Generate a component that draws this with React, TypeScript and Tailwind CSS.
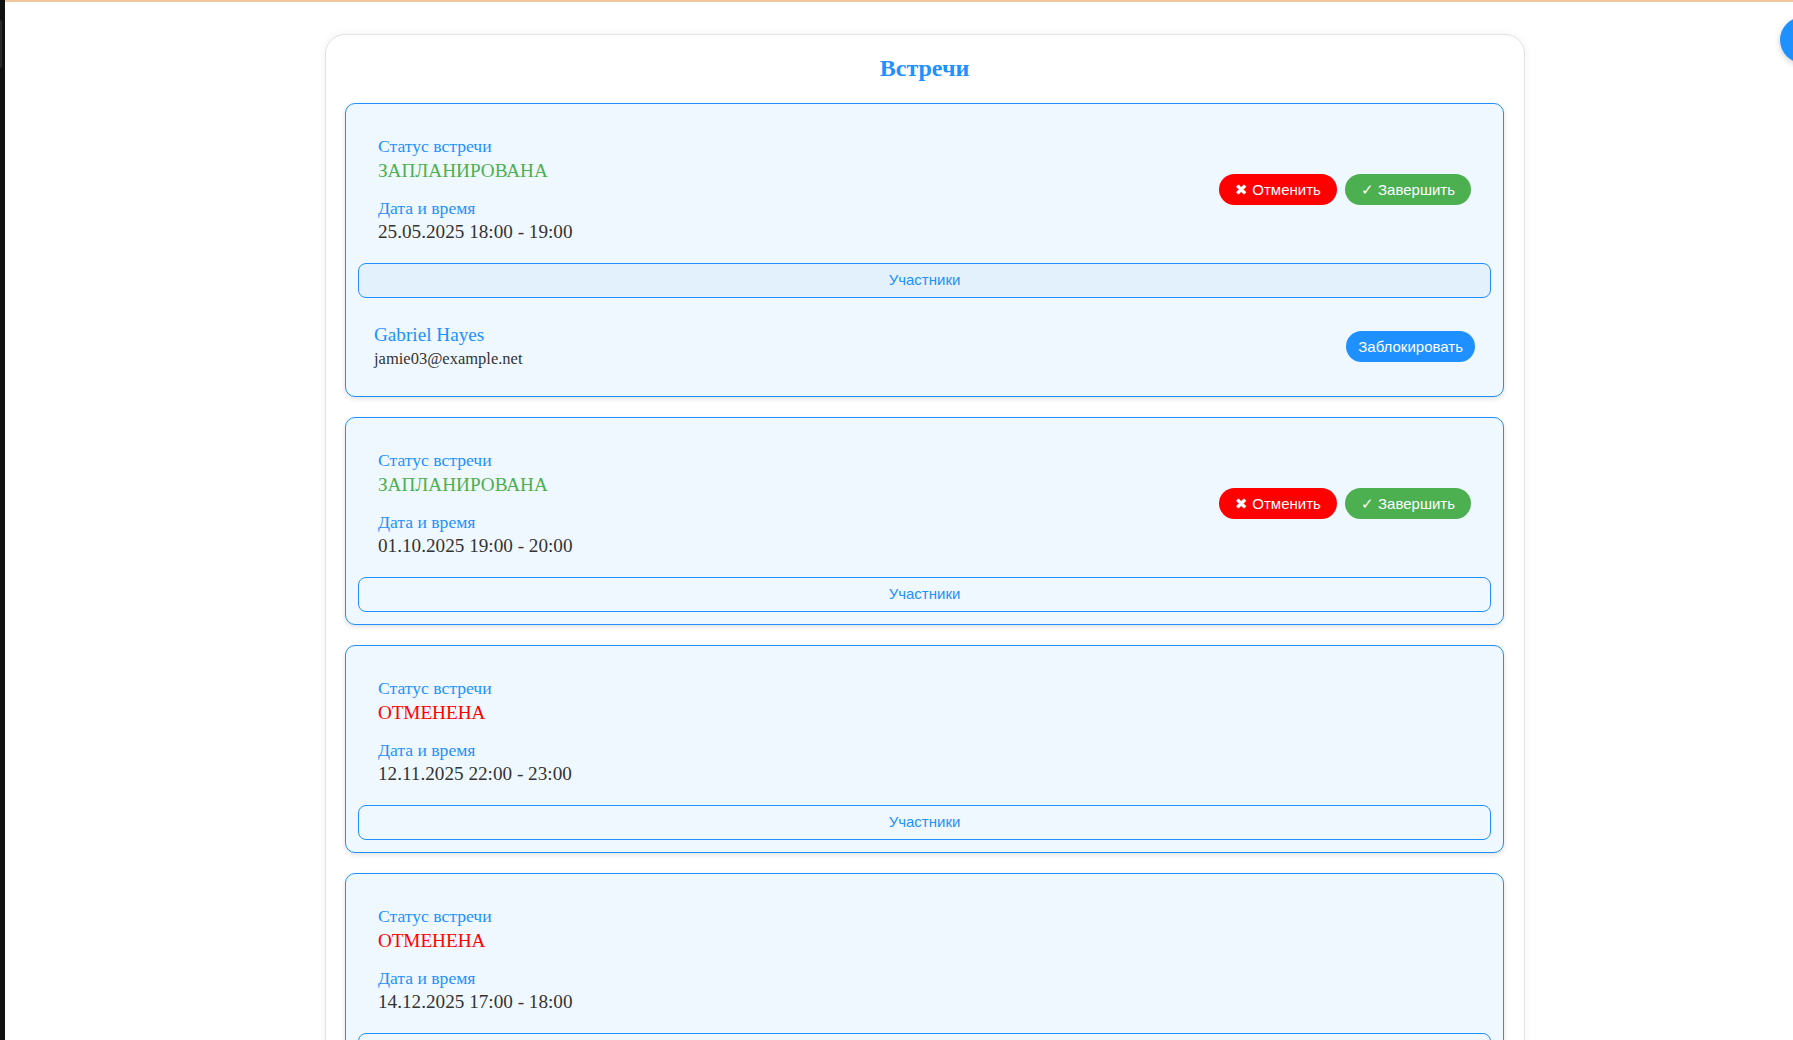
import React from "react";

type Meeting = {
  status: "planned" | "cancelled";
  date: string;
  expanded?: boolean;
  participants?: { name: string; email: string }[];
};

const meetings: Meeting[] = [
  {
    status: "planned",
    date: "25.05.2025 18:00 - 19:00",
    expanded: true,
    participants: [{ name: "Gabriel Hayes", email: "jamie03@example.net" }],
  },
  { status: "planned", date: "01.10.2025 19:00 - 20:00" },
  { status: "cancelled", date: "12.11.2025 22:00 - 23:00" },
  { status: "cancelled", date: "14.12.2025 17:00 - 18:00" },
];

const serif = { fontFamily: '"Liberation Serif", "Times New Roman", serif' };
const sans = { fontFamily: '"Liberation Sans", Arial, sans-serif' };

function MeetingCard({ m }: { m: Meeting }) {
  return (
    <div className="mb-[20px] rounded-[10px] border border-[#1e90ff] bg-[#f0f8ff] p-[12px] shadow-[0_2px_5px_rgba(0,0,0,0.12)]">
      <div className="flex items-center justify-between p-[20px]">
        <div style={serif}>
          <div className="text-[17.6px] leading-[20px] text-[#1e90ff]">Статус встречи</div>
          <div
            className={
              "mt-[4px] text-[19.2px] leading-[22px] " +
              (m.status === "planned" ? "text-[#4caf50]" : "text-[#ff0000]")
            }
          >
            {m.status === "planned" ? "ЗАПЛАНИРОВАНА" : "ОТМЕНЕНА"}
          </div>
          <div className="mt-[16px] text-[17.6px] leading-[20px] text-[#1e90ff]">Дата и время</div>
          <div className="mt-[3px] text-[19.2px] leading-[22px] text-[#333333]">{m.date}</div>
        </div>
        {m.status === "planned" && (
          <div className="flex gap-[8px]" style={sans}>
            <button className="rounded-full bg-[#ff0000] px-[16px] py-[7px] text-[15px] leading-[17px] text-white">
              ✖ Отменить
            </button>
            <button className="rounded-full bg-[#4caf50] px-[16px] py-[7px] text-[15px] leading-[17px] text-white">
              ✓ Завершить
            </button>
          </div>
        )}
      </div>
      <button
        style={sans}
        className={
          "block h-[35px] w-full rounded-[8px] border border-[#1e90ff] text-[15px] text-[#1e90ff] " +
          (m.expanded ? "bg-[#e3f1fd]" : "bg-[#f0f8ff]")
        }
      >
        Участники
      </button>
      {m.expanded && m.participants && (
        <div className="mt-[10px]">
          {m.participants.map((p) => (
            <div key={p.email} className="flex items-center justify-between px-[16px] py-[16px]">
              <div style={serif}>
                <div className="text-[19.2px] leading-[22px] text-[#1e90ff]">{p.name}</div>
                <div className="mt-[4px] text-[16.5px] leading-[18px] text-[#333333]">{p.email}</div>
              </div>
              <button
                style={sans}
                className="rounded-full bg-[#1e90ff] px-[12px] py-[7px] text-[15px] leading-[17px] text-white"
              >
                Заблокировать
              </button>
            </div>
          ))}
        </div>
      )}
    </div>
  );
}

export default function App() {
  return (
    <div className="relative flex h-[1040px] w-full overflow-hidden bg-white">
      <div className="relative h-full w-[5px] shrink-0 bg-[#111111]">
        <div className="absolute left-0 top-[20px] h-[48px] w-[2px] rounded-r-[2px] bg-[#2a2a2a]" />
      </div>
      <div className="h-full flex-1 border-t-2 border-[#f0c8a0]">
        <div className="ml-[320px] mt-[32px] w-[1200px] rounded-[20px] border border-[#e2e2e2] bg-white pl-[19px] pr-[20px] pt-[19px] shadow-[0_0_8px_rgba(0,0,0,0.06)]">
          <h2
            style={serif}
            className="mb-[21px] text-center text-[24px] font-bold leading-[28px] text-[#1e90ff]"
          >
            Встречи
          </h2>
          {meetings.map((m, i) => (
            <MeetingCard key={i} m={m} />
          ))}
        </div>
      </div>
      <div className="absolute left-[1780px] top-[17px] h-[46px] w-[46px] rounded-full bg-[#1e90ff] shadow-[0_2px_6px_rgba(0,0,0,0.2)]" />
    </div>
  );
}
